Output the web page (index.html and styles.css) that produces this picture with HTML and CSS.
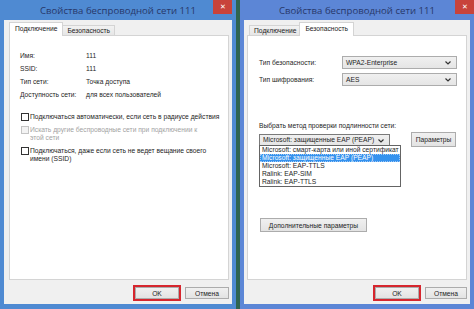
FILE: index.html
```html
<!DOCTYPE html>
<html>
<head>
    <title>Свойства беспроводной сети 111</title>
    <link rel="stylesheet" href="styles.css">
</head>
<body>
    <div class="desktop">
        <div class="window win-a">
            <div class="titlebar">
                <span class="title">Свойства беспроводной сети 111</span>
                <span class="close">&#x2715;</span>
            </div>
            <div class="client">
                <div class="tabs">
                    <div class="tab active">Подключение</div>
                    <div class="tab">Безопасность</div>
                </div>
                <div class="panel">
                    <div class="info">
                        <span>Имя:</span><span>111</span>
                        <span>SSID:</span><span>111</span>
                        <span>Тип сети:</span><span>Точка доступа</span>
                        <span>Доступность сети:</span><span>для всех пользователей</span>
                    </div>
                    <div class="checks">
                        <div class="check">
                            <span class="box"></span>
                            <span>Подключаться автоматически, если сеть в радиусе действия</span>
                        </div>
                        <div class="check disabled">
                            <span class="box"></span>
                            <span>Искать другие беспроводные сети при подключении к<br>этой сети</span>
                        </div>
                        <div class="check">
                            <span class="box"></span>
                            <span>Подключаться, даже если сеть не ведет вещание своего<br>имени (SSID)</span>
                        </div>
                    </div>
                </div>
                <div class="buttons">
                    <button class="btn ok">OK</button>
                    <button class="btn">Отмена</button>
                </div>
            </div>
        </div>

        <div class="window win-b">
            <div class="titlebar">
                <span class="title">Свойства беспроводной сети 111</span>
                <span class="close">&#x2715;</span>
            </div>
            <div class="client">
                <div class="tabs">
                    <div class="tab">Подключение</div>
                    <div class="tab active">Безопасность</div>
                </div>
                <div class="panel">
                    <div class="security">
                        <span>Тип безопасности:</span>
                        <div class="select wide">WPA2-Enterprise<svg class="chev" viewBox="0 0 6 4"><path d="M0.5 0.5 L3 3 L5.5 0.5" /></svg></div>
                        <span>Тип шифрования:</span>
                        <div class="select wide">AES<svg class="chev" viewBox="0 0 6 4"><path d="M0.5 0.5 L3 3 L5.5 0.5" /></svg></div>
                    </div>
                    <div class="method-label">Выбрать метод проверки подлинности сети:</div>
                    <div class="method-row">
                        <div class="dropdown">
                            <div class="select method">Microsoft: защищенные EAP (PEAP)<svg class="chev" viewBox="0 0 6 4"><path d="M0.5 0.5 L3 3 L5.5 0.5" /></svg></div>
                            <ul class="list">
                                <li>Microsoft: смарт-карта или иной сертификат</li>
                                <li class="selected">Microsoft: защищенные EAP (PEAP)</li>
                                <li>Microsoft: EAP-TTLS</li>
                                <li>Ralink: EAP-SIM</li>
                                <li>Ralink: EAP-TTLS</li>
                            </ul>
                        </div>
                        <button class="btn params">Параметры</button>
                    </div>
                    <button class="btn advanced">Дополнительные параметры</button>
                </div>
                <div class="buttons">
                    <button class="btn ok">OK</button>
                    <button class="btn">Отмена</button>
                </div>
            </div>
        </div>
    </div>
</body>
</html>
```

FILE: styles.css
```css
body {
    margin: 0;
    background: #2f6450;
    font-family: "Liberation Sans", Arial, sans-serif;
    font-size: 6.7px;
    color: #1e1e1e;
}

.desktop {
    display: flex;
    gap: 4px;
    height: 309px;
    overflow: hidden;
}

.window {
    position: relative;
    display: flex;
    flex-direction: column;
    height: 309px;
    box-sizing: border-box;
    padding: 0 4px 5px 4px;
    background: #4f8ad2;
}

.win-a {
    width: 236px;
}

.win-b {
    width: 234px;
    padding-right: 4px;
    background: #5c86d6;
}

.titlebar {
    height: 20px;
    display: flex;
    align-items: center;
    justify-content: center;
}

.title {
    font-family: "Open Sans", "Liberation Sans", sans-serif;
    font-size: 9.6px;
    color: #28386a;
    margin-top: 1px;
}

.close {
    position: absolute;
    top: 0;
    right: 4px;
    width: 19px;
    height: 14px;
    background: #c8433b;
    color: #fff;
    font-size: 7px;
    display: flex;
    align-items: center;
    justify-content: center;
}

.win-b .close {
    right: 0;
}

.client {
    flex: 1;
    background: #f0f0f0;
    padding: 3px 3px 0 5px;
    display: flex;
    flex-direction: column;
}

.win-b .client {
    padding-left: 3px;
}

.tabs {
    display: flex;
    align-items: flex-end;
    height: 12px;
    padding-left: 2px;
    position: relative;
    z-index: 1;
}

.tab {
    height: 9px;
    line-height: 9px;
    padding: 0 4px;
    border: 1px solid #d4d4d4;
    border-bottom: none;
    background: linear-gradient(#f2f2f2, #e6e6e6);
    color: #222;
}

.tab + .tab {
    margin-left: -1px;
}

.tab.active {
    height: 13px;
    line-height: 12px;
    margin: 0 -2px -1px -2px;
    padding: 0 5px;
    background: #fff;
    position: relative;
    z-index: 2;
}

.tab.active + .tab {
    margin-left: 1px;
}

.panel {
    height: 245px;
    background: #fff;
    border: 1px solid #d4d4d4;
    box-sizing: border-box;
    padding: 13px 6px 0 10px;
}

.win-b .panel {
    padding: 20px 6px 0 11px;
}

.info {
    display: grid;
    grid-template-columns: 66px auto;
    line-height: 13px;
}

.checks {
    margin-top: 12px;
    display: flex;
    flex-direction: column;
    gap: 5px;
}

.check {
    display: flex;
    align-items: flex-start;
    line-height: 8px;
    margin-left: 1px;
}

.box {
    width: 8px;
    height: 8px;
    box-sizing: border-box;
    border: 1px solid #333;
    background: #fff;
    margin-right: 1px;
    flex-shrink: 0;
}

.check.disabled {
    color: #a2a2a2;
}

.check.disabled .box {
    border-color: #c4c4c4;
    background: #f3f3f3;
}

.security {
    display: grid;
    grid-template-columns: 83px 115px;
    row-gap: 4px;
    align-items: center;
}

.select {
    position: relative;
    height: 13px;
    line-height: 11px;
    box-sizing: border-box;
    border: 1px solid #acacac;
    background: linear-gradient(#f0f0f0, #e5e5e5);
    padding-left: 3px;
}

.chev {
    position: absolute;
    right: 5px;
    top: 4px;
    width: 6px;
    height: 4px;
    fill: none;
    stroke: #333;
    stroke-width: 1.2;
}

.method-label {
    margin-top: 36px;
    line-height: 8px;
}

.method-row {
    margin-top: 2px;
    display: flex;
    align-items: center;
}

.dropdown {
    position: relative;
    width: 131px;
}

.select.method {
    height: 12px;
    line-height: 10px;
    border-color: #7a7a7a;
}

.list {
    position: absolute;
    top: 11px;
    left: 0;
    width: 142px;
    margin: 0;
    padding: 0;
    list-style: none;
    background: #fff;
    border: 1px solid #646464;
    box-sizing: border-box;
    z-index: 3;
}

.list li {
    height: 8px;
    line-height: 8px;
    padding-left: 2px;
    white-space: nowrap;
}

.list li.selected {
    background: #3592ee;
    color: #fff;
    outline: 1px dotted #a0c8f4;
    outline-offset: -1px;
}

.btn {
    font-family: "Liberation Sans", Arial, sans-serif;
    font-size: 6.7px;
    color: #1e1e1e;
    height: 12px;
    padding: 0;
    border: 1px solid #acacac;
    background: linear-gradient(#f0f0f0, #e3e3e3);
}

.btn.params {
    width: 45px;
    height: 15px;
    margin-left: 21px;
}

.btn.advanced {
    display: block;
    width: 107px;
    height: 14px;
    margin-top: 71px;
    margin-left: 1px;
}

.buttons {
    display: flex;
    justify-content: flex-end;
    gap: 6px;
    margin-top: 7px;
}

.btn {
    width: 44px;
}

.win-b .btn.ok + .btn {
    width: 42px;
}

.btn.ok {
    box-shadow: 0 0 0 2px #d6262e;
}
```
